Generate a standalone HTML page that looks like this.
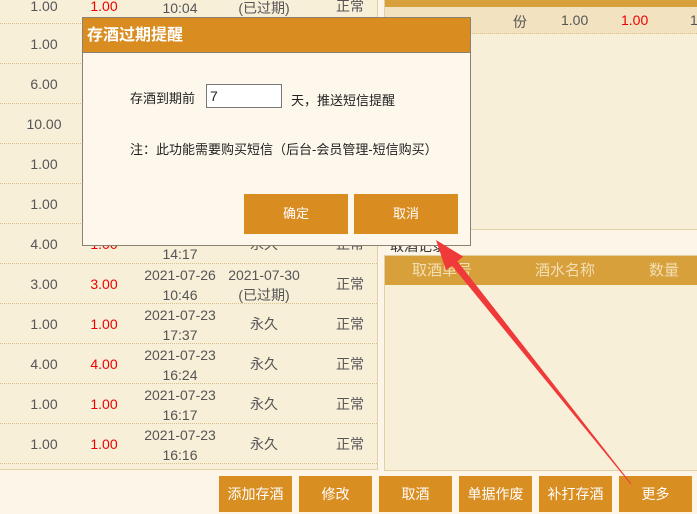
<!DOCTYPE html>
<html><head><meta charset="utf-8"><style>
*{margin:0;padding:0;box-sizing:border-box}
body{width:697px;height:514px;overflow:hidden;background:#fdf6e8;font-family:"Liberation Sans","Noto Sans CJK SC",sans-serif;position:relative;color:#555}
.abs{position:absolute}
#left{left:-2px;top:-10px;width:380px;height:480px;background:#f8efd9;border:1px solid #e2cfa4}
.row{position:absolute;left:0;width:377px;height:40px;border-bottom:1px dotted #d8c08a;font-size:14px}
.row span{position:absolute;text-align:center;line-height:20px}
.red{color:#e00}
.btn{position:absolute;top:476px;height:36px;width:73px;background:#d98e22;color:#fff;font-size:14px;text-align:center;line-height:36px}
</style></head><body>
<div id="left" class="abs"></div>
<div class="abs" style="left:0;top:0;width:377px;height:470px">
<div class="row" style="top:-16px"><span style="left:14px;width:60px;top:12px">1.00</span><span class="red" style="left:74px;width:60px;top:12px">1.00</span><span style="left:140px;width:80px;top:14px">10:04</span><span style="left:222px;width:84px;top:14px">(已过期)</span><span style="left:320px;width:60px;top:12px">正常</span></div>
<div class="row" style="top:24px"><span style="left:14px;width:60px;top:10px">1.00</span></div>
<div class="row" style="top:64px"><span style="left:14px;width:60px;top:10px">6.00</span></div>
<div class="row" style="top:104px"><span style="left:14px;width:60px;top:10px">10.00</span></div>
<div class="row" style="top:144px"><span style="left:14px;width:60px;top:10px">1.00</span></div>
<div class="row" style="top:184px"><span style="left:14px;width:60px;top:10px">1.00</span></div>
<div class="row" style="top:224px"><span style="left:14px;width:60px;top:10px">4.00</span><span class="red" style="left:74px;width:60px;top:10px">1.00</span><span style="left:140px;width:80px;top:20px">14:17</span><span style="left:222px;width:84px;top:10px">永久</span><span style="left:320px;width:60px;top:10px">正常</span></div>
<div class="row" style="top:264px"><span style="left:14px;width:60px;top:10px">3.00</span><span class="red" style="left:74px;width:60px;top:10px">3.00</span><span style="left:140px;width:80px;top:1px">2021-07-26<br>10:46</span><span style="left:222px;width:84px;top:1px">2021-07-30<br>(已过期)</span><span style="left:320px;width:60px;top:10px">正常</span></div>
<div class="row" style="top:304px"><span style="left:14px;width:60px;top:10px">1.00</span><span class="red" style="left:74px;width:60px;top:10px">1.00</span><span style="left:140px;width:80px;top:1px">2021-07-23<br>17:37</span><span style="left:222px;width:84px;top:10px">永久</span><span style="left:320px;width:60px;top:10px">正常</span></div>
<div class="row" style="top:344px"><span style="left:14px;width:60px;top:10px">4.00</span><span class="red" style="left:74px;width:60px;top:10px">4.00</span><span style="left:140px;width:80px;top:1px">2021-07-23<br>16:24</span><span style="left:222px;width:84px;top:10px">永久</span><span style="left:320px;width:60px;top:10px">正常</span></div>
<div class="row" style="top:384px"><span style="left:14px;width:60px;top:10px">1.00</span><span class="red" style="left:74px;width:60px;top:10px">1.00</span><span style="left:140px;width:80px;top:1px">2021-07-23<br>16:17</span><span style="left:222px;width:84px;top:10px">永久</span><span style="left:320px;width:60px;top:10px">正常</span></div>
<div class="row" style="top:424px"><span style="left:14px;width:60px;top:10px">1.00</span><span class="red" style="left:74px;width:60px;top:10px">1.00</span><span style="left:140px;width:80px;top:1px">2021-07-23<br>16:16</span><span style="left:222px;width:84px;top:10px">永久</span><span style="left:320px;width:60px;top:10px">正常</span></div>
</div>
<!-- right top panel -->
<div class="abs" style="left:384px;top:-2px;width:320px;height:232px;background:#f8efd9;border:1px solid #e2cfa4"></div>
<div class="abs" style="left:385px;top:0;width:312px;height:7px;background:#d7a03a"></div>
<div class="abs" style="left:385px;top:7px;width:312px;height:27px;background:#f2e2c0;border-bottom:1px dotted #d8c08a;font-size:14px;color:#555">
<span class="abs" style="left:128px;top:5px">份</span><span class="abs" style="left:176px;top:5px">1.00</span><span class="abs red" style="left:236px;top:5px">1.00</span><span class="abs" style="left:305px;top:5px">1</span></div>
<div class="abs" style="left:390px;top:236px;font-size:14px;color:#333">取酒记录</div>
<div class="abs" style="left:384px;top:255px;width:320px;height:216px;background:#f8efd9;border:1px solid #e2cfa4"></div>
<div class="abs" style="left:385px;top:256px;width:312px;height:29px;background:#d7a03a;color:#f3dfb5;font-size:15px;line-height:29px">
<span class="abs" style="left:27px">取酒单号</span><span class="abs" style="left:150px">酒水名称</span><span class="abs" style="left:264px">数量</span></div>
<div class="btn" style="left:219px">添加存酒</div>
<div class="btn" style="left:299px">修改</div>
<div class="btn" style="left:379px">取酒</div>
<div class="btn" style="left:459px">单据作废</div>
<div class="btn" style="left:539px">补打存酒</div>
<div class="btn" style="left:619px">更多</div>
<!-- dialog -->
<div class="abs" style="left:82px;top:17px;width:389px;height:229px;background:#fef8ec;border:1px solid #8a8170">
<div style="height:35px;background:#d98c20;border-bottom:1px solid #8a8170;color:#fff;font-size:16px;font-weight:bold;line-height:35px;padding-left:4px">存酒过期提醒</div>
<div class="abs" style="left:47px;top:70px;font-size:13px;color:#222">存酒到期前</div>
<div class="abs" style="left:123px;top:66px;width:76px;height:24px;border:1px solid #777;background:#fff;font-size:14px;color:#222;padding-left:3px;line-height:22px">7</div>
<div class="abs" style="left:208px;top:72px;font-size:13px;color:#222">天，推送短信提醒</div>
<div class="abs" style="left:47px;top:121px;font-size:13px;color:#222">注：此功能需要购买短信（后台-会员管理-短信购买）</div>
<div class="abs" style="left:161px;top:176px;width:104px;height:40px;background:#d98c20;color:#fff;font-size:13px;text-align:center;line-height:40px">确定</div>
<div class="abs" style="left:271px;top:176px;width:104px;height:40px;background:#d98c20;color:#fff;font-size:13px;text-align:center;line-height:40px">取消</div>
</div>
<svg class="abs" style="left:0;top:0" width="697" height="514"><polygon fill="#f03a3a" points="436,240 463.3,256.6 457.4,261.3 631.4,483.7 630.6,484.3 452,265.7 446.1,270.4"/></svg>
</body></html>
